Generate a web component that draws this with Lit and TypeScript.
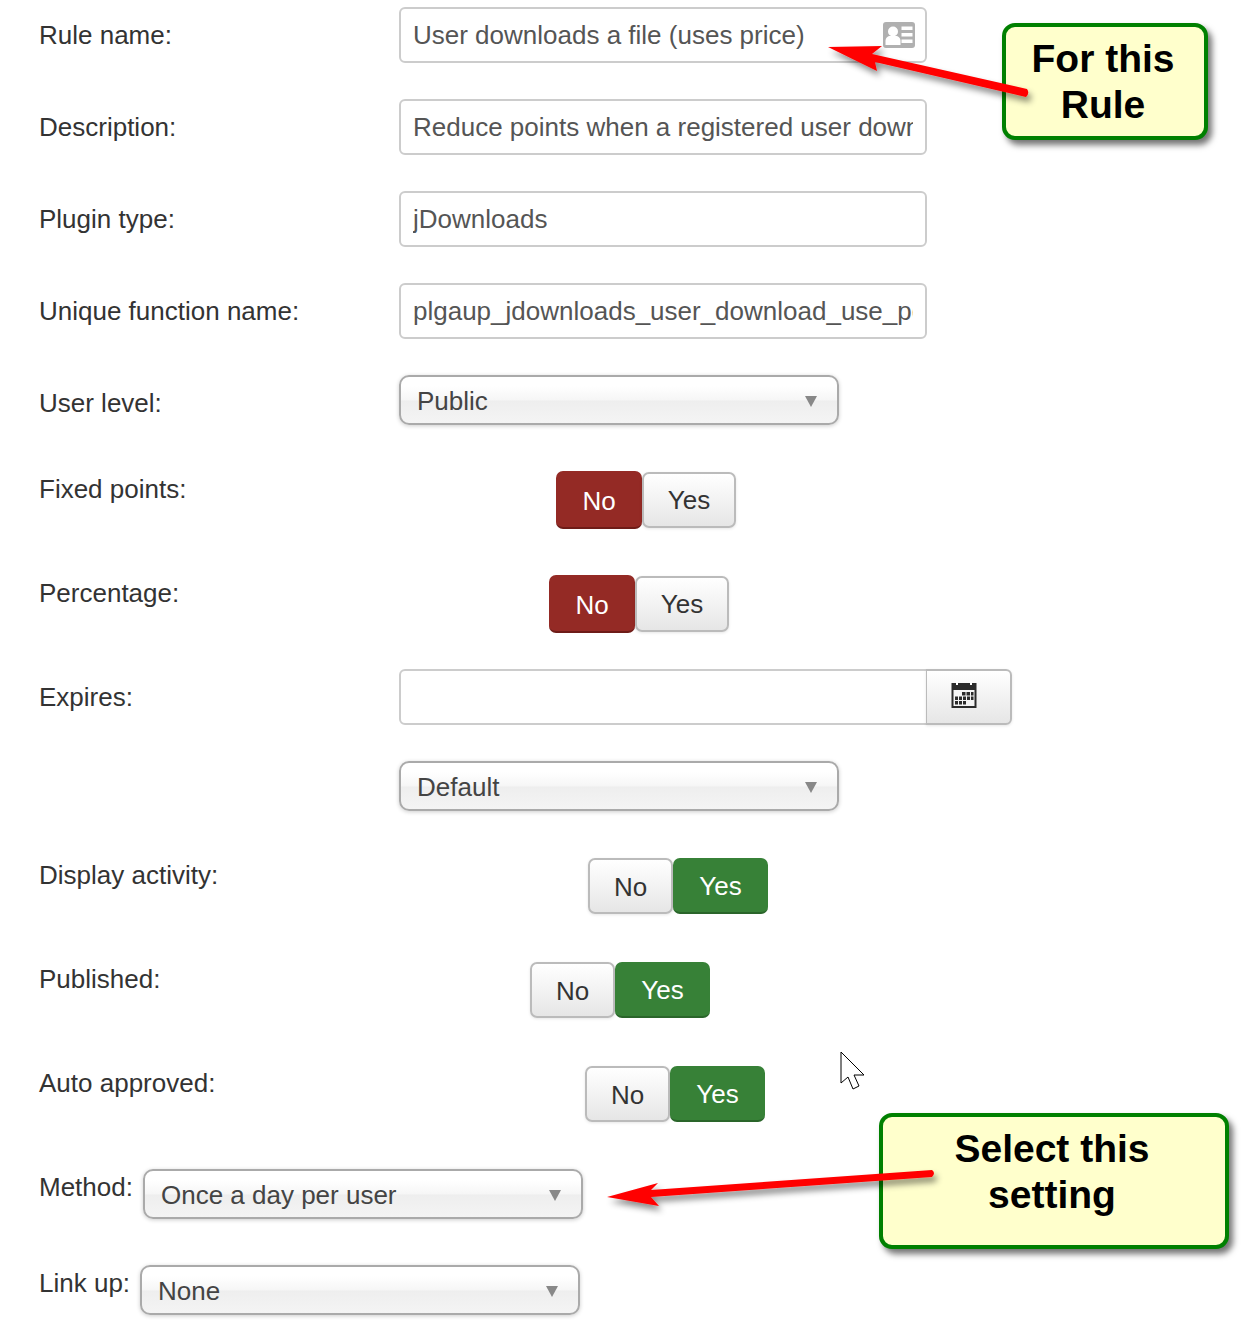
import { LitElement, html, css, svg } from 'lit';
import { customElement } from 'lit/decorators.js';

const idCard = html`<svg class="card" width="32" height="26" viewBox="0 0 32 26">
  <rect width="32" height="26" rx="3" fill="#b0b0b0"/>
  <circle cx="10" cy="9.500" r="5" fill="#fff"/>
  <path d="M2.500 23v-4c0-3.500 2.500-5 4.500-5h6c2 0 4.500 1.500 4.500 5v4z" fill="#fff"/>
  <rect x="18.500" y="4.500" width="11" height="3.500" fill="#fff"/>
  <rect x="18.500" y="11" width="11" height="3.500" fill="#fff"/>
  <rect x="18.500" y="17.500" width="11" height="3.500" fill="#fff"/>
</svg>`;

const calendar = html`<svg width="26" height="28" viewBox="0 0 26 28">
  <rect x="0.500" y="2" width="25" height="25" fill="#2b2b2b"/>
  <rect x="2.500" y="9" width="21" height="16" fill="#f4f4f4"/>
  <rect x="5" y="0" width="2" height="4" fill="#fff"/>
  <rect x="19" y="0" width="2" height="4" fill="#fff"/>
  <g fill="#2b2b2b">
    <rect x="11" y="11" width="3.500" height="3.500"/><rect x="15.500" y="11" width="3.500" height="3.500"/><rect x="20" y="11" width="2.500" height="3.500"/>
    <rect x="4" y="15.500" width="3" height="3.500"/><rect x="8" y="15.500" width="3" height="3.500"/><rect x="12" y="15.500" width="3" height="3.500"/><rect x="16" y="15.500" width="3" height="3.500"/><rect x="20" y="15.500" width="2.500" height="3.500"/>
    <rect x="4" y="20" width="3" height="3.500"/><rect x="8" y="20" width="3" height="3.500"/><rect x="12" y="20" width="3" height="3.500"/>
  </g>
</svg>`;

@customElement('app-root')
export class AppRoot extends LitElement {

  static styles = css`
    :host {
      display: block;
      position: relative;
      height: 1342px;
      overflow: hidden;
      background: #fff;
      font-family: "Liberation Sans", Arial, sans-serif;
      font-size: 26px;
      color: #333;
    }

    .form {
      padding: 7px 0 0 39px;
    }

    .row {
      display: flex;
      align-items: flex-start;
      margin-bottom: 36px;
    }

    .row.tall {
      margin-top: 46px;
    }

    .label {
      width: 360px;
      flex: none;
      line-height: 36px;
      white-space: nowrap;
    }

    .label.offset {
      padding-top: 10px;
    }

    .label.inline {
      width: auto;
      margin-right: 10px;
    }

    .input {
      box-sizing: border-box;
      width: 528px;
      height: 56px;
      display: flex;
      align-items: center;
      justify-content: space-between;
      padding: 0 12px 0 12px;
      background: #fff;
      border: 2px solid #ccc;
      border-radius: 6px;
      color: #555;
    }

    .input span {
      overflow: hidden;
      white-space: nowrap;
    }

    .input .card {
      flex: none;
      margin-right: -2px;
    }

    .input.with-addon {
      border-radius: 6px 0 0 6px;
      border-right-width: 1px;
    }

    .addon {
      box-sizing: border-box;
      width: 86px;
      height: 56px;
      display: flex;
      align-items: center;
      justify-content: center;
      margin-left: -1px;
      padding: 0 9px 4px 0;
      background: linear-gradient(#fff, #e6e6e6);
      border: 2px solid #bbb;
      border-left-width: 1px;
      border-radius: 0 6px 6px 0;
      box-shadow: 0 1px 3px rgba(0, 0, 0, .1);
    }

    .select {
      box-sizing: border-box;
      width: 440px;
      height: 50px;
      display: flex;
      align-items: center;
      justify-content: space-between;
      padding: 2px 20px 0 16px;
      background: linear-gradient(#fff 20%, #f6f6f6 50%, #eee 52%, #f4f4f4 100%);
      border: 2px solid #aaa;
      border-radius: 10px;
      box-shadow: 0 1px 4px rgba(0, 0, 0, .2);
      color: #444;
    }

    .caret {
      width: 0;
      height: 0;
      border-left: 6px solid transparent;
      border-right: 6px solid transparent;
      border-top: 11px solid #888;
    }

    .toggle {
      display: flex;
      align-items: center;
      height: 58px;
    }

    .btn {
      box-sizing: border-box;
      height: 56px;
      display: flex;
      align-items: center;
      justify-content: center;
      background: linear-gradient(#fff, #e6e6e6);
      border: 2px solid #bbb;
      border-radius: 7px;
      box-shadow: 0 1px 3px rgba(0, 0, 0, .1);
      color: #333;
    }

    .btn.no {
      width: 85px;
      padding-top: 2px;
    }

    .btn.yes {
      width: 94px;
    }

    .btn.danger {
      width: 86px;
      height: 58px;
      padding-top: 4px;
      background: #942a25;
      border: 0;
      border-bottom: 2px solid #6e1c18;
      color: #fff;
      box-shadow: none;
    }

    .btn.success {
      width: 95px;
      height: 56px;
      padding-top: 3px;
      background: #378137;
      border: 0;
      border-bottom: 2px solid #2a652a;
      color: #fff;
      box-shadow: none;
    }

    .callout {
      position: absolute;
      box-sizing: border-box;
      padding: 9px 4px 0 0;
      background: #ffc;
      border: 4px solid #008000;
      border-radius: 13px;
      box-shadow: 4px 5px 6px rgba(0, 0, 0, .55);
      color: #000;
      font-size: 39px;
      font-weight: bold;
      line-height: 46px;
      text-align: center;
    }

    .callout.rule {
      left: 1002px;
      top: 23px;
      width: 206px;
      height: 117px;
    }

    .callout.setting {
      left: 879px;
      top: 1113px;
      width: 350px;
      height: 136px;
    }

    .overlay {
      position: absolute;
      left: 0;
      top: 0;
      pointer-events: none;
    }
  `;

  inputRow(label: string, value: string, icon: unknown = '') {
    return html`
      <div class="row">
        <div class="label offset">${label}</div>
        <div class="input"><span>${value}</span>${icon}</div>
      </div>
    `;
  }

  selectRow(label: string, value: string) {
    return html`
      <div class="row">
        <div class="label offset">${label}</div>
        <div class="select"><span>${value}</span><i class="caret"></i></div>
      </div>
    `;
  }

  // indent is how far the switch sits from the start of the field column
  toggleRow(label: string, indent: number, yes: boolean) {
    return html`
      <div class="row tall">
        <div class="label">${label}</div>
        <div class="toggle" style="margin-left:${indent}px">
          <div class="btn no ${yes ? '' : 'danger'}">No</div>
          <div class="btn yes ${yes ? 'success' : ''}">Yes</div>
        </div>
      </div>
    `;
  }

  inlineSelectRow(label: string, value: string) {
    return html`
      <div class="row tall">
        <div class="label inline">${label}</div>
        <div class="select"><span>${value}</span><i class="caret"></i></div>
      </div>
    `;
  }

  renderMarks() {
    return svg`
      <defs>
        <filter id="drop" x="-10%" y="-50%" width="120%" height="220%">
          <feDropShadow dx="3" dy="5" stdDeviation="3" flood-color="#000" flood-opacity=".45"/>
        </filter>
      </defs>
      <g filter="url(#drop)" fill="#f00">
        <path d="M828 47L882 46L872 54L1027 89Q1030 93 1026 97L875 62L877 71z"/>
        <path d="M607 1197L658 1183L651 1190L932 1170Q936 1173 932 1177L651 1197L659 1206z"/>
      </g>
      <path d="M841 1052V1083L848 1077L853 1089L859 1086L854 1075L864 1075z" fill="#fff" stroke="#000" stroke-width="1"/>
    `;
  }

  render() {
    return html`
      <div class="form">
        ${this.inputRow('Rule name:', 'User downloads a file (uses price)', idCard)}
        ${this.inputRow('Description:', 'Reduce points when a registered user downloads a file')}
        ${this.inputRow('Plugin type:', 'jDownloads')}
        ${this.inputRow('Unique function name:', 'plgaup_jdownloads_user_download_use_points')}
        ${this.selectRow('User level:', 'Public')}
        ${this.toggleRow('Fixed points:', 157, false)}
        ${this.toggleRow('Percentage:', 150, false)}
        <div class="row">
          <div class="label offset">Expires:</div>
          <div class="input with-addon"></div>
          <div class="addon">${calendar}</div>
        </div>
        ${this.selectRow('', 'Default')}
        ${this.toggleRow('Display activity:', 189, true)}
        ${this.toggleRow('Published:', 131, true)}
        ${this.toggleRow('Auto approved:', 186, true)}
        ${this.inlineSelectRow('Method:', 'Once a day per user')}
        ${this.inlineSelectRow('Link up:', 'None')}
      </div>
      <div class="callout rule">For this<br />Rule</div>
      <div class="callout setting">Select this<br />setting</div>
      <svg class="overlay" width="1253" height="1342">${this.renderMarks()}</svg>
    `;
  }
}
